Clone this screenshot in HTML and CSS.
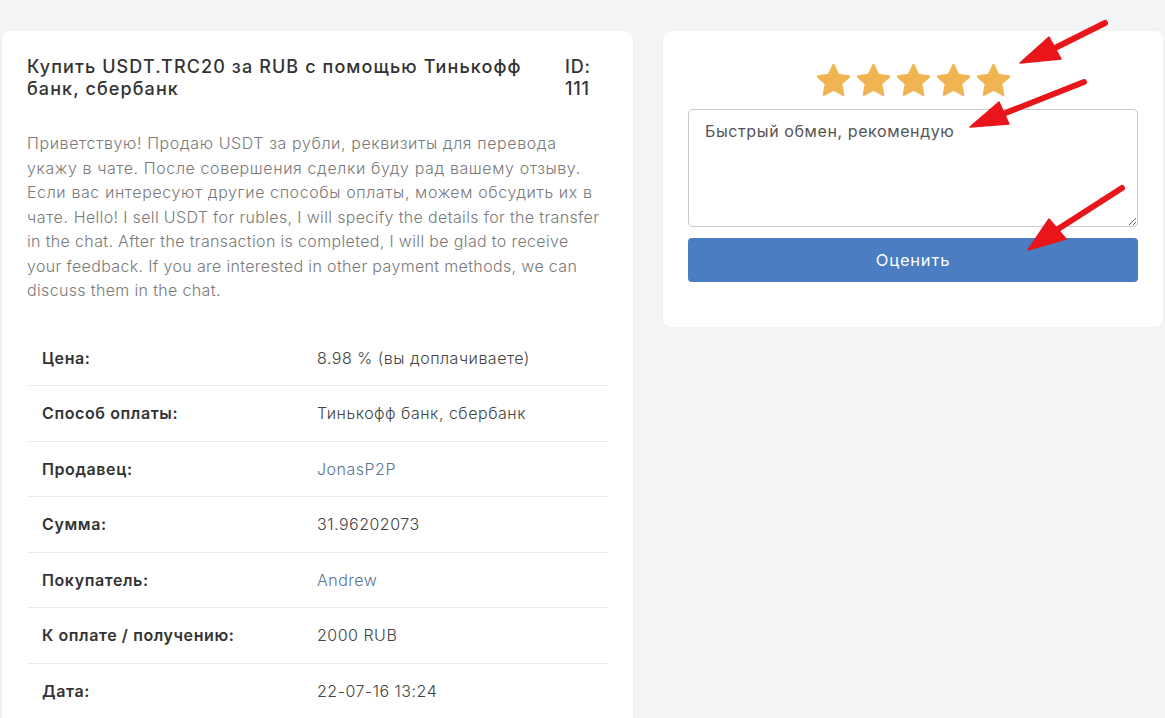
FILE: index.html
```html
<!DOCTYPE html>
<html lang="ru">
<head>
<meta charset="utf-8">
<title>Сделка 111</title>
<link rel="stylesheet" href="styles.css">
</head>
<body>
<div class="page">
  <section class="card deal">
    <div class="deal-head">
      <h1 class="deal-title">Купить USDT.TRC20 за RUB с помощью Тинькофф банк, сбербанк</h1>
      <div class="deal-id">ID: 111</div>
    </div>
    <p class="deal-desc">Приветствую! Продаю USDT за рубли, реквизиты для перевода укажу в чате. После совершения сделки буду рад вашему отзыву. Если вас интересуют другие способы оплаты, можем обсудить их в чате. <span class="en" lang="en">Hello! I sell USDT for rubles, I will specify the details for the transfer in the chat. After the transaction is completed, I will be glad to receive your feedback. If you are interested in other payment methods, we can discuss them in the chat.</span></p>
    <table class="info">
      <tr><th>Цена:</th><td>8.98 % (вы доплачиваете)</td></tr>
      <tr><th>Способ оплаты:</th><td>Тинькофф банк, сбербанк</td></tr>
      <tr><th>Продавец:</th><td><a class="user" href="#">JonasP2P</a></td></tr>
      <tr><th>Сумма:</th><td>31.96202073</td></tr>
      <tr><th>Покупатель:</th><td><a class="user" href="#">Andrew</a></td></tr>
      <tr><th>К оплате / получению:</th><td>2000 RUB</td></tr>
      <tr><th>Дата:</th><td>22-07-16 13:24</td></tr>
    </table>
  </section>

  <section class="card review">
    <div class="stars">
      <svg class="star" viewBox="0 0 24 24"><path d="M12 2.6l2.9 6.1 6.6.8-4.9 4.6 1.3 6.6L12 17.4l-5.9 3.3 1.3-6.6-4.9-4.6 6.6-.8z"/></svg>
      <svg class="star" viewBox="0 0 24 24"><path d="M12 2.6l2.9 6.1 6.6.8-4.9 4.6 1.3 6.6L12 17.4l-5.9 3.3 1.3-6.6-4.9-4.6 6.6-.8z"/></svg>
      <svg class="star" viewBox="0 0 24 24"><path d="M12 2.6l2.9 6.1 6.6.8-4.9 4.6 1.3 6.6L12 17.4l-5.9 3.3 1.3-6.6-4.9-4.6 6.6-.8z"/></svg>
      <svg class="star" viewBox="0 0 24 24"><path d="M12 2.6l2.9 6.1 6.6.8-4.9 4.6 1.3 6.6L12 17.4l-5.9 3.3 1.3-6.6-4.9-4.6 6.6-.8z"/></svg>
      <svg class="star" viewBox="0 0 24 24"><path d="M12 2.6l2.9 6.1 6.6.8-4.9 4.6 1.3 6.6L12 17.4l-5.9 3.3 1.3-6.6-4.9-4.6 6.6-.8z"/></svg>
    </div>
    <textarea class="comment">Быстрый обмен, рекомендую</textarea>
    <button class="rate-btn" type="button">Оценить</button>
  </section>
</div>

<svg class="arrows" viewBox="0 0 1165 718" width="1165" height="718">
  <g class="arrow">
    <line x1="1105" y1="23" x2="1053" y2="49"/>
    <polygon points="1020,63 1049,37 1061,59"/>
  </g>
  <g class="arrow">
    <line x1="1084" y1="82" x2="1003" y2="114"/>
    <polygon points="970,127 999,102 1009,124"/>
  </g>
  <g class="arrow">
    <line x1="1122" y1="188" x2="1055" y2="231"/>
    <polygon points="1028,250 1049,219 1066,239"/>
  </g>
</svg>
</body>
</html>
```

FILE: styles.css
```css
* { box-sizing: border-box; }

html, body {
  margin: 0;
  height: 100%;
  overflow: hidden;
}

body {
  position: relative;
  background: #f4f5f7;
  font-family: Inter, "Open Sans", "Liberation Sans", sans-serif;
  color: #333;
}

.page {
  display: flex;
  align-items: flex-start;
  gap: 30px;
  padding: 31px 0 0 2px;
}

.card {
  background: #fff;
  border-radius: 8px;
  box-shadow: 0 0 6px rgba(0, 0, 0, 0.03);
}

.deal {
  width: 631px;
  padding: 25px 25px 20px;
}

.deal-head {
  display: flex;
  gap: 20px;
}

.deal-title {
  flex: 1;
  margin: 0;
  font-size: 18px;
  font-weight: 500;
  line-height: 22px;
  letter-spacing: 1.1px;
  color: #333;
}

.deal-id {
  width: 43px;
  font-size: 18px;
  font-weight: 500;
  line-height: 22px;
  letter-spacing: 0.8px;
  color: #333;
}

.deal-desc {
  margin: 31px 0 28px;
  font-size: 16px;
  font-weight: 300;
  line-height: 24.5px;
  letter-spacing: 0.6px;
  color: #7a7a7a;
}

.deal-desc .en {
  letter-spacing: 0.35px;
}

.info {
  width: 100%;
  border-collapse: collapse;
  font-size: 16px;
  line-height: 22.5px;
}

.info tr + tr th,
.info tr + tr td {
  border-top: 1px solid #e9ebee;
}

.info th,
.info td {
  padding: 16px 15px;
  text-align: left;
  vertical-align: middle;
}

.info th {
  width: 290px;
  font-weight: 600;
  letter-spacing: 0.6px;
  color: #333;
}

.info td {
  padding-left: 0;
  font-weight: 300;
  letter-spacing: 0.5px;
  color: #444;
}

.user {
  color: #5b7595;
  text-decoration: none;
}

.review {
  width: 500px;
  padding: 30px 25px 45px;
  display: flex;
  flex-direction: column;
  align-items: stretch;
}

.stars {
  display: flex;
  justify-content: center;
  gap: 1px;
  margin-bottom: 9px;
}

.star {
  width: 39px;
  height: 39px;
}

.star path {
  fill: #f0b552;
  stroke: #f0b552;
  stroke-width: 1.6;
  stroke-linejoin: round;
}

.comment {
  display: block;
  width: 100%;
  height: 118px;
  padding: 10px 16px;
  border: 1px solid #c8c8c8;
  border-radius: 5px;
  font-family: inherit;
  font-size: 16px;
  line-height: 22px;
  letter-spacing: 0.6px;
  color: #555;
  background: #fff;
}

.rate-btn {
  display: block;
  width: 100%;
  height: 44px;
  margin-top: 11px;
  border: 0;
  border-radius: 4px;
  background: #4a7dc1;
  color: #fff;
  font-family: inherit;
  font-size: 16.5px;
  font-weight: 400;
  letter-spacing: 0.8px;
}

.arrows {
  position: absolute;
  left: 0;
  top: 0;
  pointer-events: none;
}

.arrow line {
  stroke: #e8161b;
  stroke-width: 6;
  stroke-linecap: round;
}

.arrow polygon {
  fill: #e8161b;
  stroke: #e8161b;
  stroke-width: 1.5;
  stroke-linejoin: round;
}
```
